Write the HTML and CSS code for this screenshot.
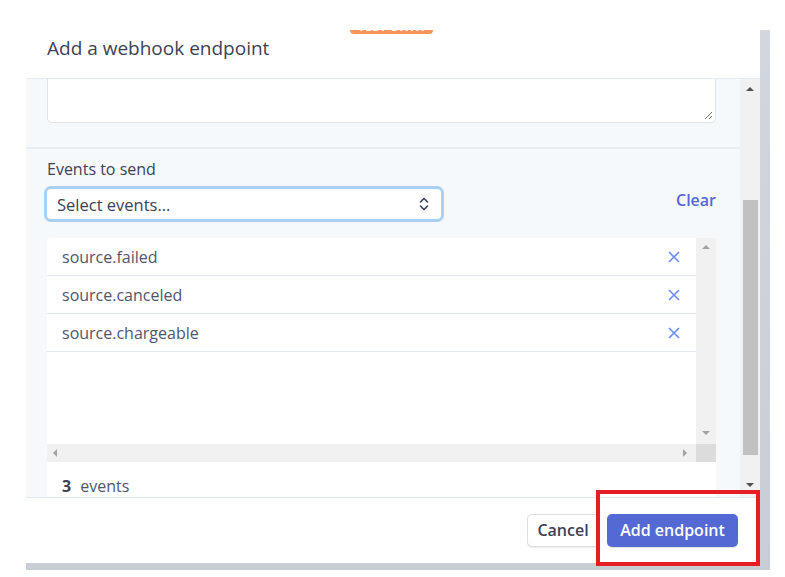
FILE: index.html
```html
<!DOCTYPE html>
<html lang="en">
  <head>
    <meta charset="utf-8" />
    <title>Add a webhook endpoint</title>
    <link rel="stylesheet" href="styles.css">
  </head>
  <body>
    <div class="mode-tab"><span>TEST DATA</span></div>

    <div class="shell">
      <div class="modal">
        <div class="modal-header">
          <h2>Add a webhook endpoint</h2>
        </div>

        <div class="modal-body">
          <div class="body-content">
            <div class="section-top">
              <div class="textarea-box">
                <svg class="grip" width="10" height="10" viewBox="0 0 10 10">
                  <path d="M9 2L2 9M9 6L6 9" stroke="#777" stroke-width="1" fill="none" />
                </svg>
              </div>
            </div>

            <div class="section-events">
              <div class="label">Events to send</div>
              <div class="select-row">
                <div class="select">
                  <span>Select events...</span>
                  <svg width="10" height="14" viewBox="0 0 10 14">
                    <path d="M1.5 5L5 1.5 8.5 5M1.5 9L5 12.5 8.5 9" stroke="#3c4257" stroke-width="1.6" fill="none" stroke-linecap="round" stroke-linejoin="round" />
                  </svg>
                </div>
                <a class="clear" href="#">Clear</a>
              </div>

              <div class="event-list">
                <div class="list-view">
                  <div class="list-rows">
                    <div class="event-row">
                      <span>source.failed</span>
                      <svg width="12" height="12" viewBox="0 0 12 12"><path d="M1 1l10 10M11 1L1 11" stroke="#6f8ff0" stroke-width="1.7" /></svg>
                    </div>
                    <div class="event-row">
                      <span>source.canceled</span>
                      <svg width="12" height="12" viewBox="0 0 12 12"><path d="M1 1l10 10M11 1L1 11" stroke="#6f8ff0" stroke-width="1.7" /></svg>
                    </div>
                    <div class="event-row">
                      <span>source.chargeable</span>
                      <svg width="12" height="12" viewBox="0 0 12 12"><path d="M1 1l10 10M11 1L1 11" stroke="#6f8ff0" stroke-width="1.7" /></svg>
                    </div>
                  </div>
                  <div class="vbar">
                    <span class="arrow up light"></span>
                    <span class="arrow down light"></span>
                  </div>
                </div>
                <div class="hbar">
                  <div class="htrack">
                    <span class="arrow left"></span>
                    <span class="arrow right"></span>
                  </div>
                  <div class="corner"></div>
                </div>
                <div class="list-count"><b>3</b> events</div>
              </div>
            </div>
          </div>

          <div class="body-scroll">
            <span class="arrow up"></span>
            <div class="thumb"></div>
            <span class="arrow down"></span>
          </div>
        </div>

        <div class="modal-footer">
          <button class="btn cancel">Cancel</button>
          <button class="btn primary">Add endpoint</button>
        </div>
      </div>
    </div>

    <div class="highlight"></div>
  </body>
</html>
```

FILE: styles.css
```css
body {
  margin: 0;
  background: #fff;
  font-family: "Open Sans", "Noto Sans", sans-serif;
  color: #3c4257;
}

.mode-tab {
  position: absolute;
  left: 350px;
  top: 30px;
  width: 83px;
  height: 4px;
  overflow: hidden;
  background: #f7955d;
  border-radius: 0 0 4px 4px;
  text-align: center;
  z-index: 2;
}
.mode-tab span {
  display: block;
  margin-top: -9px;
  font-size: 11px;
  line-height: 12px;
  font-weight: 700;
  color: #fff;
  letter-spacing: 1px;
}

.shell {
  margin: 30px 0 0 26px;
  width: 744px;
  height: 540px;
  box-sizing: border-box;
  padding: 0 10px 7px 0;
  background: linear-gradient(#d2d6dd, #c9cdd4);
}

.modal {
  height: 533px;
  background: #fff;
  display: flex;
  flex-direction: column;
}

.modal-header {
  height: 48px;
  box-sizing: border-box;
  padding: 6px 0 0 21px;
}
.modal-header h2 {
  margin: 0;
  font-size: 19px;
  line-height: 24px;
  font-weight: 500;
  color: #3c4257;
}

.modal-body {
  flex: 1;
  display: flex;
  min-height: 0;
  border-top: 1px solid #e6ebf1;
  background: #f6f9fc;
  overflow: hidden;
}

.body-content {
  flex: 1;
}

.section-top {
  padding: 0 24px 24px 21px;
  border-bottom: 2px solid #e9eef3;
}

.textarea-box {
  position: relative;
  height: 43px;
  background: #fff;
  border: 1px solid #dfe4ea;
  border-top: none;
  border-radius: 0 0 5px 5px;
}
.grip {
  position: absolute;
  right: 2px;
  bottom: 2px;
}

.section-events {
  padding: 9px 24px 0 21px;
}

.label {
  font-size: 16px;
  line-height: 22px;
  font-weight: 500;
}

.select-row {
  display: flex;
  justify-content: space-between;
  align-items: center;
  margin-top: 9px;
}

.select {
  width: 394px;
  height: 30px;
  box-sizing: border-box;
  padding: 0 12px 0 10px;
  display: flex;
  align-items: center;
  justify-content: space-between;
  background: #fff;
  border-radius: 4px;
  box-shadow: 0 0 0 3px #a9d0f5, 0 1px 2px rgba(0, 0, 0, 0.2);
  font-size: 16.5px;
  font-weight: 500;
}

.clear {
  margin-top: -8px;
  font-size: 16px;
  font-weight: 600;
  color: #5469d4;
  text-decoration: none;
}

.event-list {
  margin-top: 19px;
  background: #fff;
  border-radius: 4px 4px 0 0;
}

.list-view {
  display: flex;
  height: 206px;
}
.list-rows {
  flex: 1;
}
.event-row {
  height: 38px;
  box-sizing: border-box;
  padding: 0 16px 0 15px;
  display: flex;
  align-items: center;
  justify-content: space-between;
  border-bottom: 1px solid #e3e8ee;
  font-size: 16px;
  color: #4f566b;
}

.vbar {
  width: 20px;
  background: #f1f1f1;
  display: flex;
  flex-direction: column;
  justify-content: space-between;
  align-items: center;
  padding: 7px 0 9px;
  box-sizing: border-box;
}

.hbar {
  display: flex;
  height: 18px;
}
.htrack {
  flex: 1;
  background: #f1f1f1;
  display: flex;
  align-items: center;
  justify-content: space-between;
  padding: 0 9px 0 6px;
}
.corner {
  width: 20px;
  background: #dcdcdc;
}

.list-count {
  padding: 13px 15px 0;
  font-size: 16px;
  line-height: 22px;
  color: #4f566b;
}
.list-count b {
  color: #3c4257;
  margin-right: 5px;
}

.body-scroll {
  width: 20px;
  background: #f1f1f1;
  display: flex;
  flex-direction: column;
  align-items: center;
  padding: 8px 0 10px;
  box-sizing: border-box;
}
.body-scroll .thumb {
  width: 15px;
  height: 255px;
  margin: 109px 0 auto;
  background: #c1c1c1;
}

.arrow {
  width: 0;
  height: 0;
  border: 4px solid transparent;
}
.arrow.up {
  border-top: none;
  border-bottom: 4px solid #505050;
}
.arrow.down {
  border-bottom: none;
  border-top: 4px solid #505050;
}
.arrow.light.up {
  border-bottom-color: #a3a3a3;
}
.arrow.light.down {
  border-top-color: #a3a3a3;
}
.arrow.left {
  border-left: none;
  border-right: 4px solid #a3a3a3;
}
.arrow.right {
  border-right: none;
  border-left: 4px solid #a3a3a3;
}

.modal-footer {
  height: 66px;
  box-sizing: border-box;
  border-top: 1px solid #e3e8ee;
  display: flex;
  justify-content: flex-end;
  align-items: center;
  gap: 8px;
  padding: 0 22px 1px 0;
}

.btn {
  height: 33px;
  box-sizing: border-box;
  padding: 0;
  border-radius: 5px;
  font-family: inherit;
  font-size: 16px;
  font-weight: 600;
}
.cancel {
  width: 72px;
  background: #fff;
  color: #3c4257;
  border: 1px solid #dcdfe6;
  box-shadow: 0 1px 1px rgba(0, 0, 0, 0.08);
}
.primary {
  width: 131px;
  background: #5469d4;
  color: #fff;
  border: none;
  box-shadow: 0 1px 1px rgba(0, 0, 0, 0.12);
}

.highlight {
  position: absolute;
  left: 596px;
  top: 490px;
  width: 164px;
  height: 76px;
  box-sizing: border-box;
  border: 4px solid #e51d25;
}
```
